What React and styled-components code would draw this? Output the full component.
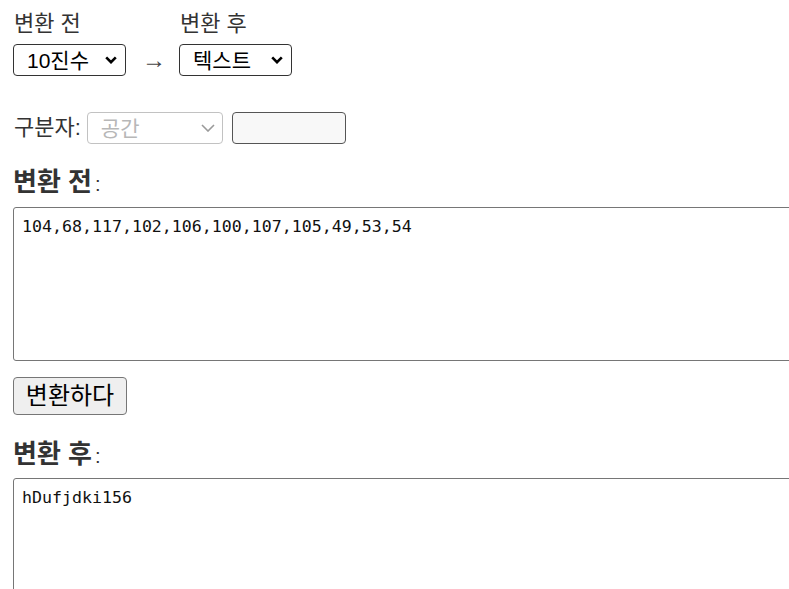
import styled, { createGlobalStyle } from "styled-components";

const Global = createGlobalStyle`
  html, body {
    margin: 0;
    overflow: hidden;
    background: #fff;
  }
  body {
    font-family: "Liberation Sans", "Noto Sans CJK KR", sans-serif;
    color: #333;
  }
`;

const Page = styled.div`
  padding: 11px 13px 0;
`;

const ModeRow = styled.div`
  display: flex;
  align-items: flex-end;
`;

const Field = styled.div`
  display: flex;
  flex-direction: column;
  gap: 7px;
`;

const Label = styled.label`
  font-size: 22px;
  line-height: 26px;
  height: 26px;
  color: #333;
  padding-left: 1px;
`;

const SelectWrap = styled.div`
  position: relative;
  width: ${(p) => p.$w || 113}px;
  height: ${(p) => p.$h || 32}px;
`;

const Select = styled.select`
  appearance: none;
  width: 100%;
  height: 100%;
  font-family: "Liberation Sans", "Noto Sans CJK KR", sans-serif;
  font-size: 21px;
  padding: 0 0 0 13px;
  border: 1px solid ${(p) => (p.disabled ? "#a9a9a9" : "#333")};
  border-radius: 4px;
  background: #fff;
  color: ${(p) => (p.disabled ? "#999" : "#000")};
`;

const Chevron = styled.svg`
  position: absolute;
  right: ${(p) => p.$right}px;
  top: 50%;
  transform: translateY(-50%);
  pointer-events: none;
`;

const Arrow = styled.span`
  font-size: 24px;
  line-height: 32px;
  color: #444;
  margin: 0 13px 0 16px;
`;

const SepRow = styled.div`
  display: flex;
  align-items: center;
  gap: 9px;
  margin-top: 36px;
`;

const SepLabel = styled(Label)`
  margin-right: -3px;
`;

const SepInput = styled.input`
  width: 114px;
  height: 32px;
  box-sizing: border-box;
  border: 1px solid #555;
  border-radius: 4px;
  background: #f8f8f8;
`;

const Heading = styled.h3`
  margin: ${(p) => p.$top}px 0 0;
  height: 30px;
  font-size: 26px;
  line-height: 30px;
  font-weight: bold;
  color: #333;
`;

const Colon = styled.span`
  font-weight: normal;
  font-size: 20px;
  line-height: 30px;
  margin-left: 3px;
`;

const Area = styled.textarea`
  display: block;
  width: 820px;
  height: 154px;
  box-sizing: border-box;
  margin-top: ${(p) => p.$top}px;
  padding: 8px;
  border: 1px solid #767676;
  border-radius: 3px;
  font-family: "DejaVu Sans Mono", "Liberation Mono", monospace;
  font-size: 16.6px;
  line-height: 22px;
  color: #111;
  resize: none;
`;

const Button = styled.button`
  display: block;
  margin-top: 16px;
  width: 114px;
  height: 38px;
  font-family: "Liberation Sans", "Noto Sans CJK KR", sans-serif;
  font-size: 24px;
  line-height: 36px;
  color: #000;
  background: #efefef;
  border: 1px solid #767676;
  border-radius: 4px;
  padding: 0;
`;

function Dropdown({ w, h, disabled, value, options }) {
  return (
    <SelectWrap $w={w} $h={h}>
      <Select disabled={disabled} defaultValue={value}>
        {options.map(([v, t]) => (
          <option key={v} value={v}>{t}</option>
        ))}
      </Select>
      {disabled ? (
        <Chevron $right={8} width="14" height="8" viewBox="0 0 14 8">
          <path d="M1 1 L7 7 L13 1" fill="none" stroke="#9a9a9a" strokeWidth="1.6" />
        </Chevron>
      ) : (
        <Chevron $right={9} width="12" height="8" viewBox="0 0 12 8">
          <path d="M1.2 1.4 L6 6.2 L10.8 1.4" fill="none" stroke="#000" strokeWidth="2.6" />
        </Chevron>
      )}
    </SelectWrap>
  );
}

export default function App() {
  return (
    <Page>
      <Global />
      <ModeRow>
        <Field>
          <Label>변환 전</Label>
          <Dropdown
            value="dec"
            options={[["dec", "10진수"], ["hex", "16진수"], ["text", "텍스트"]]}
          />
        </Field>
        <Arrow>→</Arrow>
        <Field>
          <Label>변환 후</Label>
          <Dropdown
            value="text"
            options={[["dec", "10진수"], ["text", "텍스트"]]}
          />
        </Field>
      </ModeRow>
      <SepRow>
        <SepLabel>구분자:</SepLabel>
        <Dropdown w={136} h={32} disabled value="space" options={[["space", "공간"]]} />
        <SepInput type="text" />
      </SepRow>
      <Heading $top={23}>변환 전<Colon>:</Colon></Heading>
      <Area $top={10} defaultValue="104,68,117,102,106,100,107,105,49,53,54" />
      <Button>변환하다</Button>
      <Heading $top={24}>변환 후<Colon>:</Colon></Heading>
      <Area $top={9} defaultValue="hDufjdki156" />
    </Page>
  );
}
